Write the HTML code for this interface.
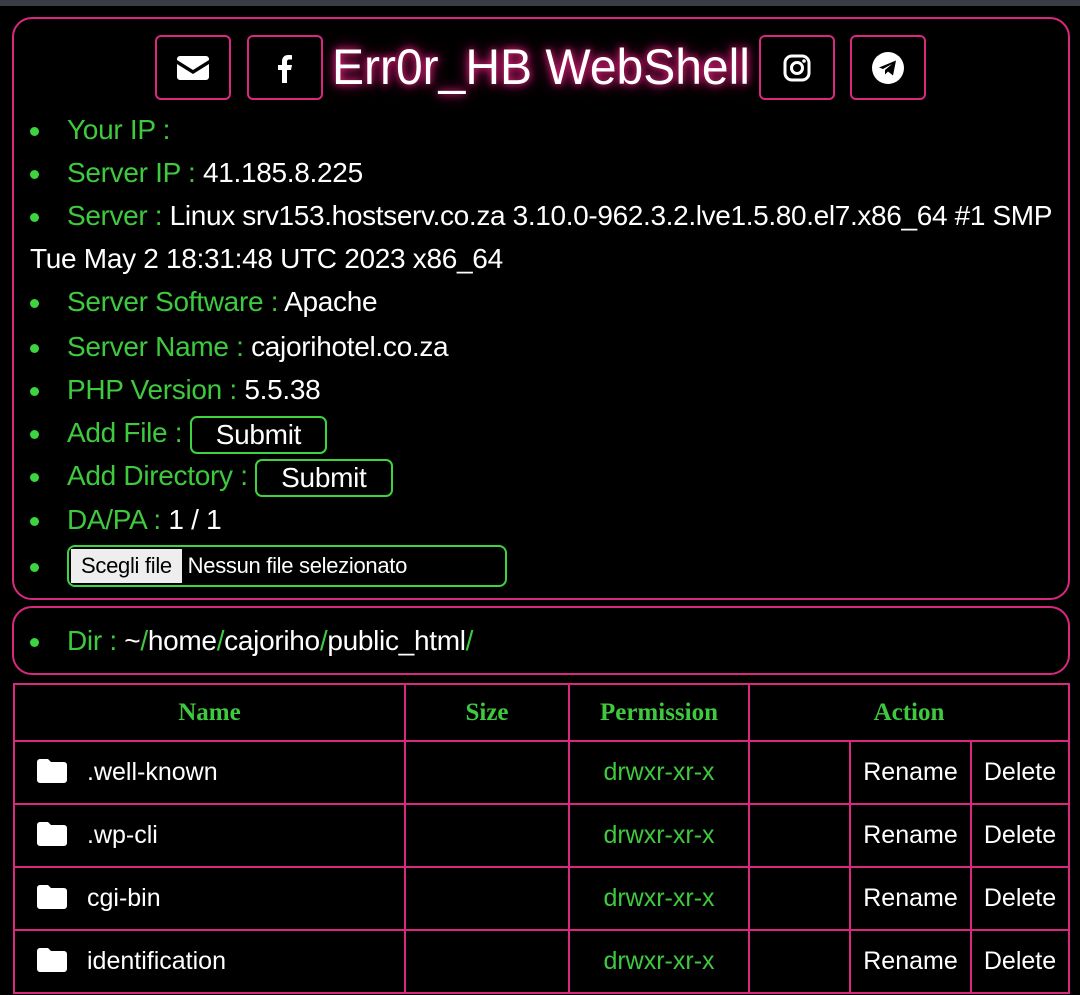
<!DOCTYPE html>
<html><head><meta charset="utf-8"><style>
body{margin:0;width:1080px;height:995px;background:#000;overflow:hidden;font-family:"Liberation Sans Narrow","Liberation Sans",sans-serif;color:#fff;position:relative}
.top{position:absolute;left:0;top:0;width:1080px;height:6px;background:#3a3d43}
.box{position:absolute;border:2.5px solid #d9287f;border-radius:20px;box-sizing:border-box}
.ib{position:absolute;top:35px;width:76px;height:65px;border:2.5px solid #d9287f;border-radius:6px;box-sizing:border-box;display:flex;align-items:center;justify-content:center}
.title{position:absolute;left:332px;top:38px;font-size:50px;color:#fff;text-shadow:0 0 8px #ff2a8a,0 0 16px #c0106a;white-space:nowrap;transform:scaleX(0.96);transform-origin:left top}
.li{position:absolute;left:30px;font-size:28px;white-space:nowrap;line-height:34px;letter-spacing:-0.3px}
.li::before{content:"";position:absolute;left:0;top:14px;width:9px;height:9px;border-radius:50%;background:#3ed43e}
.li.nb::before{display:none}
.g{color:#3ec93e}
.li span.t{margin-left:37px}
.btn{display:inline-block;border:2.5px solid #3ed43e;border-radius:7px;padding:0 24px;line-height:34px;vertical-align:middle}
table{position:absolute;left:13px;top:683px;width:1057px;border-collapse:collapse}
td,th{border:2.5px solid #d9287f;font-size:25px;padding:0}
th{color:#3ec93e;height:55px;font-weight:bold;font-family:"Liberation Serif",serif;font-size:25px}
td{height:61px}
.nm{padding-left:22px}
.perm{color:#3ec93e;text-align:center}
.ac{text-align:center}
</style></head><body>
<div class="top"></div>
<div class="box" style="left:12px;top:17px;width:1058px;height:583px"></div>
<div class="box" style="left:12px;top:606px;width:1058px;height:69px"></div>
<div class="ib" style="left:155px"><svg width="32" height="24" viewBox="0 0 32 24"><path d="M3 0h26a3 3 0 0 1 3 3v1L16 14 0 4V3a3 3 0 0 1 3-3z" fill="#fff"/><path d="M0 8l16 10 16-10v13a3 3 0 0 1-3 3H3a3 3 0 0 1-3-3z" fill="#fff"/></svg></div>
<div class="ib" style="left:247px"><svg width="16" height="30" viewBox="0 0 16 30"><path d="M10 30V17h4l1-5h-5V9c0-1.5.5-2.5 2.6-2.5H15V2.2C14.5 2.1 13 2 11.3 2 7.7 2 5 4.2 5 8.3V12H1v5h4v13z" fill="#fff"/></svg></div>
<div class="title">Err0r_HB WebShell</div>
<div class="ib" style="left:759px"><svg width="28" height="28" viewBox="0 0 28 28"><rect x="2" y="2" width="24" height="24" rx="7" fill="none" stroke="#fff" stroke-width="3"/><circle cx="14" cy="14" r="5.5" fill="none" stroke="#fff" stroke-width="3"/><circle cx="21" cy="7" r="1.8" fill="#fff"/></svg></div>
<div class="ib" style="left:850px"><svg width="32" height="32" viewBox="0 0 32 32"><circle cx="16" cy="16" r="16" fill="#fff"/><path d="M7 15.5l17-7-3 15-5-4-3 3v-4.5l7-6-9 5z" fill="#000"/></svg></div>

<div class="li" style="top:113px"><span class="t g">Your IP :</span></div>
<div class="li" style="top:156px"><span class="t g">Server IP :</span> 41.185.8.225</div>
<div class="li" style="top:199px;letter-spacing:-0.35px"><span class="t g">Server :</span> Linux srv153.hostserv.co.za 3.10.0-962.3.2.lve1.5.80.el7.x86_64 #1 SMP</div>
<div class="li nb" style="top:242px;left:30px">Tue May 2 18:31:48 UTC 2023 x86_64</div>
<div class="li" style="top:285px"><span class="t g">Server Software :</span> Apache</div>
<div class="li" style="top:330px"><span class="t g">Server Name :</span> cajorihotel.co.za</div>
<div class="li" style="top:373px"><span class="t g">PHP Version :</span> 5.5.38</div>
<div class="li" style="top:416px"><span class="t g">Add File :</span> <span class="btn">Submit</span></div>
<div class="li" style="top:459px"><span class="t g">Add Directory :</span> <span class="btn">Submit</span></div>
<div class="li" style="top:503px"><span class="t g">DA/PA :</span> 1 / 1</div>
<div class="li" style="top:549px"><span class="t" style="display:inline-block;border:2.5px solid #3ed43e;border-radius:8px;width:440px;height:42px;box-sizing:border-box;font-size:22px;line-height:34px;position:relative;top:-4px;white-space:nowrap;overflow:hidden"><span style="background:#eee;color:#000;padding:0 10px;display:inline-block;margin:2px 0 0 2px;line-height:34px">Scegli file</span> Nessun file selezionato</span></div>
<div class="li" style="top:624px"><span class="t g">Dir :</span> ~<span class="g">/</span>home<span class="g">/</span>cajoriho<span class="g">/</span>public_html<span class="g">/</span></div>

<table>
<tr><th style="width:389px">Name</th><th style="width:162px">Size</th><th style="width:178px">Permission</th><th colspan="3">Action</th></tr>
<tr><td class="nm"><svg width="30" height="24" viewBox="0 0 30 24" style="vertical-align:-3px;margin-right:20px"><path d="M3 0h8l3 3h13a3 3 0 0 1 3 3v15a3 3 0 0 1-3 3H3a3 3 0 0 1-3-3V3a3 3 0 0 1 3-3z" fill="#fff"/></svg>.well-known</td><td></td><td class="perm">drwxr-xr-x</td><td style="width:99px"></td><td class="ac" style="width:119px">Rename</td><td class="ac">Delete</td></tr>
<tr><td class="nm"><svg width="30" height="24" viewBox="0 0 30 24" style="vertical-align:-3px;margin-right:20px"><path d="M3 0h8l3 3h13a3 3 0 0 1 3 3v15a3 3 0 0 1-3 3H3a3 3 0 0 1-3-3V3a3 3 0 0 1 3-3z" fill="#fff"/></svg>.wp-cli</td><td></td><td class="perm">drwxr-xr-x</td><td></td><td class="ac">Rename</td><td class="ac">Delete</td></tr>
<tr><td class="nm"><svg width="30" height="24" viewBox="0 0 30 24" style="vertical-align:-3px;margin-right:20px"><path d="M3 0h8l3 3h13a3 3 0 0 1 3 3v15a3 3 0 0 1-3 3H3a3 3 0 0 1-3-3V3a3 3 0 0 1 3-3z" fill="#fff"/></svg>cgi-bin</td><td></td><td class="perm">drwxr-xr-x</td><td></td><td class="ac">Rename</td><td class="ac">Delete</td></tr>
<tr><td class="nm"><svg width="30" height="24" viewBox="0 0 30 24" style="vertical-align:-3px;margin-right:20px"><path d="M3 0h8l3 3h13a3 3 0 0 1 3 3v15a3 3 0 0 1-3 3H3a3 3 0 0 1-3-3V3a3 3 0 0 1 3-3z" fill="#fff"/></svg>identification</td><td></td><td class="perm">drwxr-xr-x</td><td></td><td class="ac">Rename</td><td class="ac">Delete</td></tr>
</table>
</body></html>
